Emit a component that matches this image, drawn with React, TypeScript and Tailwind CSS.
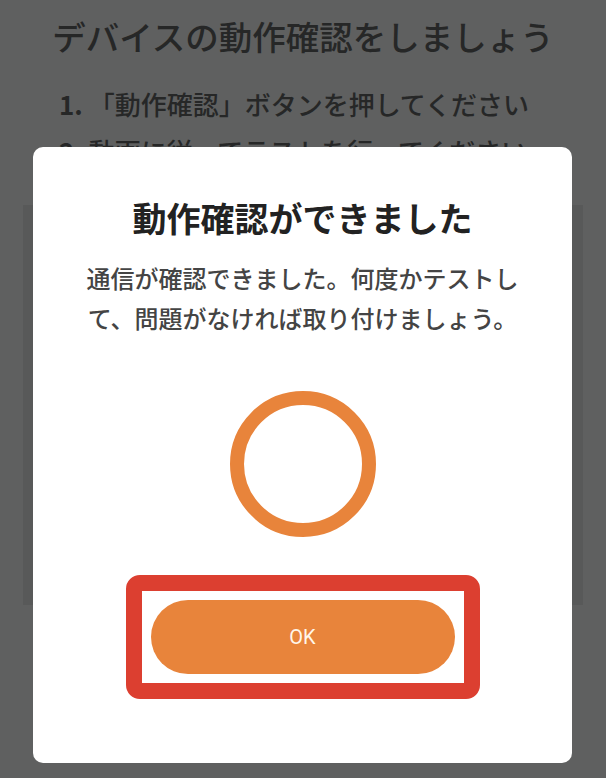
import React from "react";

const jp = "font-['Noto_Sans_CJK_JP','Noto_Sans',sans-serif]";

export default function App() {
  return (
    <div className={`relative w-[606px] h-[778px] overflow-hidden bg-[#5f6060] ${jp}`}>
      {/* background page */}
      <div className="flex flex-col">
        <h1 className="mt-[14px] text-center text-[33.5px] leading-[44px] font-medium text-[#262727]">
          デバイスの動作確認をしましょう
        </h1>
        <div className="mt-[22px] flex flex-col pl-[59px] text-[26px] leading-[47px] text-[#262727] font-medium">
          <div>
            <span className="font-bold">1.</span> 「動作確認」ボタンを押してください
          </div>
          <div>
            <span className="font-bold">2.</span> 動画に従ってテストを行ってください
          </div>
        </div>
        <div className="mt-[31px] mx-[23px] h-[400px] bg-[#585959]" />
      </div>

      {/* modal */}
      <div className="absolute left-[33px] top-[147px] w-[539px] h-[616px] rounded-[10px] bg-white flex flex-col items-center">
        <h2 className="mt-[47px] text-[34px] leading-[48px] font-bold text-[#222222]">
          動作確認ができました
        </h2>
        <p className="mt-[16px] w-[440px] text-center text-[24px] leading-[40px] font-medium text-[#444444]">
          通信が確認できました。何度かテストし
          <br />
          て、問題がなければ取り付けましょう。
        </p>
        <div className="mt-[53px] w-[146px] h-[146px] rounded-full border-[14px] border-[#e8843b]" />
        <div className="mt-[38px] w-[354px] h-[124px] rounded-[14px] border-[16px] border-[#dc3f30] bg-white flex items-center justify-center">
          <button className="w-[304px] h-[74px] rounded-full bg-[#e8843b] flex items-center justify-center font-['Roboto',sans-serif] text-[20px] text-[#fff6ea]">
            OK
          </button>
        </div>
      </div>
    </div>
  );
}
